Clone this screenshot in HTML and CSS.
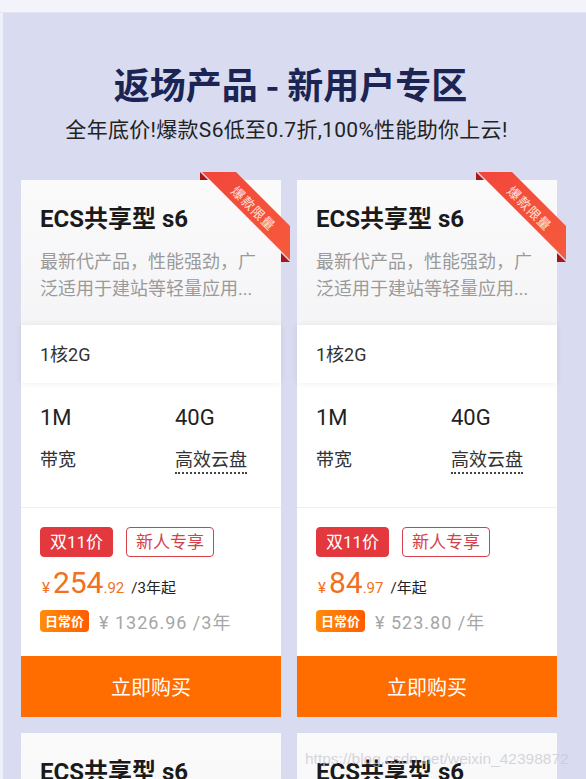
FILE: index.html
```html
<!DOCTYPE html>
<html lang="zh-CN">
<head>
<meta charset="utf-8">
<title>返场产品 - 新用户专区</title>
<link rel="stylesheet" href="styles.css">
</head>
<body>
<div class="topbar"></div>
<main class="zone">
  <h1 class="zone-title">返场产品 - 新用户专区</h1>
  <p class="zone-sub">全年底价!爆款S6低至0.7折,100%性能助你上云!</p>
  <div class="cards">
    <div class="card">
      <svg class="ribbon" width="93" height="93" viewBox="0 0 93 93">
        <defs>
          <linearGradient id="rb1" x1="0" y1="0" x2="1" y2="1">
            <stop offset="0" stop-color="#f2463a"/>
            <stop offset="1" stop-color="#f65a3c"/>
          </linearGradient>
        </defs>
        <polygon points="3,8 3,0 11,8" fill="#a8161a"/>
        <polygon points="84,81 93,90 84,90" fill="#a8161a"/>
        <polygon points="5,0 39,0 93,54 93,88" fill="url(#rb1)"/>
        <text x="57" y="36" transform="rotate(45 57 36)" text-anchor="middle" dominant-baseline="central" class="ribbon-text">爆款限量</text>
      </svg>
      <div class="card-head">
        <h3 class="card-title">ECS共享型 s6</h3>
        <p class="card-desc">最新代产品，性能强劲，广泛适用于建站等轻量应用...</p>
      </div>
      <div class="card-core">1核2G</div>
      <div class="card-specs">
        <div class="spec">
          <div class="spec-val">1M</div>
          <div class="spec-name">带宽</div>
        </div>
        <div class="spec">
          <div class="spec-val">40G</div>
          <div class="spec-name"><span class="dotted">高效云盘</span></div>
        </div>
      </div>
      <div class="card-price">
        <div class="tags">
          <span class="tag tag-fill">双11价</span>
          <span class="tag tag-line">新人专享</span>
        </div>
        <div class="price">
          <span class="yen">¥</span><span class="big">254</span><span class="dec">.92</span><span class="unit">/3年起</span>
        </div>
        <div class="daily">
          <span class="daily-badge">日常价</span>
          <span class="daily-val">¥ 1326.96 /3年</span>
        </div>
      </div>
      <button class="buy">立即购买</button>
    </div>

    <div class="card">
      <svg class="ribbon" width="93" height="93" viewBox="0 0 93 93">
        <defs>
          <linearGradient id="rb2" x1="0" y1="0" x2="1" y2="1">
            <stop offset="0" stop-color="#f2463a"/>
            <stop offset="1" stop-color="#f65a3c"/>
          </linearGradient>
        </defs>
        <polygon points="3,8 3,0 11,8" fill="#a8161a"/>
        <polygon points="84,81 93,90 84,90" fill="#a8161a"/>
        <polygon points="5,0 39,0 93,54 93,88" fill="url(#rb2)"/>
        <text x="57" y="36" transform="rotate(45 57 36)" text-anchor="middle" dominant-baseline="central" class="ribbon-text">爆款限量</text>
      </svg>
      <div class="card-head">
        <h3 class="card-title">ECS共享型 s6</h3>
        <p class="card-desc">最新代产品，性能强劲，广泛适用于建站等轻量应用...</p>
      </div>
      <div class="card-core">1核2G</div>
      <div class="card-specs">
        <div class="spec">
          <div class="spec-val">1M</div>
          <div class="spec-name">带宽</div>
        </div>
        <div class="spec">
          <div class="spec-val">40G</div>
          <div class="spec-name"><span class="dotted">高效云盘</span></div>
        </div>
      </div>
      <div class="card-price">
        <div class="tags">
          <span class="tag tag-fill">双11价</span>
          <span class="tag tag-line">新人专享</span>
        </div>
        <div class="price">
          <span class="yen">¥</span><span class="big">84</span><span class="dec">.97</span><span class="unit">/年起</span>
        </div>
        <div class="daily">
          <span class="daily-badge">日常价</span>
          <span class="daily-val">¥ 523.80 /年</span>
        </div>
      </div>
      <button class="buy">立即购买</button>
    </div>

    <div class="card">
      <div class="card-head">
        <h3 class="card-title">ECS共享型 s6</h3>
        <p class="card-desc">最新代产品，性能强劲，广泛适用于建站等轻量应用...</p>
      </div>
    </div>
    <div class="card">
      <div class="card-head">
        <h3 class="card-title">ECS共享型 s6</h3>
        <p class="card-desc">最新代产品，性能强劲，广泛适用于建站等轻量应用...</p>
      </div>
    </div>
  </div>
  <div class="watermark">https://blog.csdn.net/weixin_42398872</div>
</main>
</body>
</html>
```

FILE: styles.css
```css
* { box-sizing: border-box; }
html, body { margin: 0; padding: 0; }
body {
  background: #eef0fa;
  font-family: Roboto, "Noto Sans CJK SC", sans-serif;
  color: #222;
  height: 779px;
  overflow: hidden;
}
.topbar {
  height: 13px;
  background: #f3f3fc;
  border-bottom: 1px solid #e2e4ef;
}
.zone {
  position: relative;
  margin-left: 3px;
  background: #d9dcf0;
  padding-top: 48px;
  min-height: 766px;
}
.zone-title {
  margin: 0;
  padding-right: 8px;
  text-align: center;
  font-size: 36px;
  line-height: 44px;
  font-weight: 700;
  color: #1b2452;
  font-family: "Noto Sans CJK SC", sans-serif;
}
.zone-sub {
  margin: 11px 0 0;
  padding-right: 16px;
  text-align: center;
  font-size: 21px;
  line-height: 28px;
  letter-spacing: 0.3px;
  color: #222;
}
.cards {
  margin: 36px 0 0 18px;
  display: grid;
  grid-template-columns: 260px 260px;
  column-gap: 16px;
  row-gap: 16px;
}
.card {
  position: relative;
  background: #fff;
  display: flex;
  flex-direction: column;
}
.ribbon {
  position: absolute;
  top: -8px;
  right: -9px;
  z-index: 3;
}
.ribbon-text {
  font-family: "Noto Sans CJK SC", sans-serif;
  font-size: 13px;
  fill: #ffe4de;
  letter-spacing: 1px;
}
.card-head {
  background: linear-gradient(#fafafb, #f5f5f7);
  padding: 24px 19px 23px;
  height: 145px;
}
.card-title {
  margin: 0;
  font-size: 24px;
  line-height: 30px;
  font-weight: 700;
  color: #1a1a1a;
}
.card-desc {
  margin: 14px 0 0;
  font-size: 18px;
  line-height: 27px;
  color: #9a9a9a;
  display: -webkit-box;
  -webkit-line-clamp: 2;
  -webkit-box-orient: vertical;
  overflow: hidden;
  width: 222px;
}
.card-core {
  position: relative;
  z-index: 1;
  height: 58px;
  line-height: 60px;
  padding-left: 19px;
  font-size: 18px;
  color: #333;
  background: #fff;
  box-shadow: 0 0 7px rgba(0, 0, 0, 0.07);
}
.card-specs {
  display: grid;
  grid-template-columns: 135px 1fr;
  padding: 20px 19px 34px;
  border-bottom: 1px solid #efefef;
}
.spec-val {
  font-size: 22px;
  line-height: 30px;
  color: #222;
}
.spec-name {
  margin-top: 14px;
  font-size: 18px;
  line-height: 26px;
  color: #333;
}
.dotted {
  border-bottom: 2px dotted #444;
  padding-bottom: 2px;
}
.card-price {
  padding: 19px 19px 24px;
}
.tags {
  display: flex;
  gap: 13px;
}
.tag {
  height: 30px;
  line-height: 28px;
  font-size: 17px;
  border-radius: 4px;
  padding: 0 9px;
}
.tag-fill {
  background: #e2383e;
  color: #fff;
  border: 1px solid #e2383e;
}
.tag-line {
  color: #d6404a;
  border: 1.5px solid #d6404a;
  padding: 0 9px;
}
.price {
  margin-top: 9px;
  height: 34px;
  display: flex;
  align-items: baseline;
  color: #f0711f;
}
.yen {
  font-size: 15px;
  margin-left: 2px;
  margin-right: 3px;
}
.big {
  font-size: 30px;
  line-height: 34px;
}
.dec {
  font-size: 15px;
}
.unit {
  font-size: 15px;
  color: #222;
  margin-left: 7px;
}
.daily {
  margin-top: 10px;
  display: flex;
  align-items: center;
  height: 22px;
}
.daily-badge {
  height: 22px;
  line-height: 22px;
  padding: 0 5px;
  border-radius: 4px;
  background: linear-gradient(90deg, #ff8d0a, #ff5d00);
  color: #fff;
  font-size: 13px;
  font-weight: 700;
  font-family: "Noto Sans CJK SC", sans-serif;
}
.daily-val {
  margin-left: 10px;
  font-size: 18px;
  letter-spacing: 1px;
  color: #a6a6a6;
}
.buy {
  display: block;
  width: 100%;
  height: 61px;
  border: 0;
  margin: 0;
  background: #ff6c00;
  color: #fff;
  font-family: "Noto Sans CJK SC", sans-serif;
  font-size: 20px;
  cursor: pointer;
}
.watermark {
  position: absolute;
  left: 302px;
  top: 737px;
  font-family: "Liberation Sans", Arial, sans-serif;
  font-size: 15.5px;
  color: rgba(200, 200, 210, 0.75);
  white-space: nowrap;
  z-index: 5;
}
```
